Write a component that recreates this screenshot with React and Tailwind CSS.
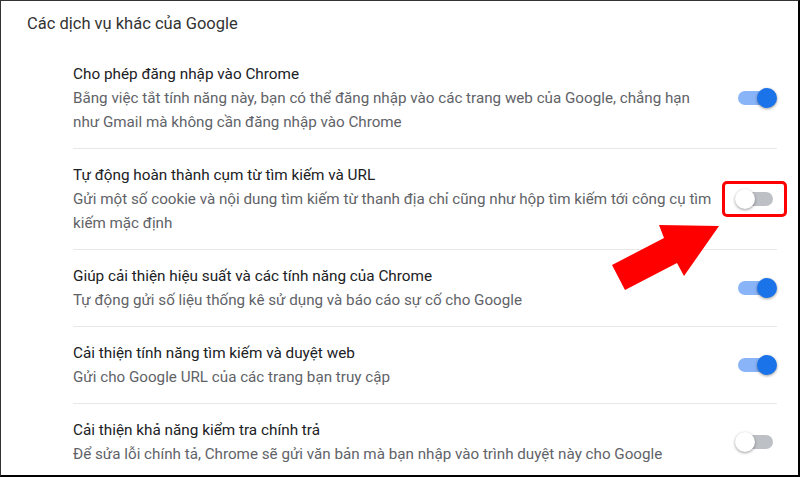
import React from "react";

const rows = [
  {
    title: "Cho phép đăng nhập vào Chrome",
    lines: [
      "Bằng việc tắt tính năng này, bạn có thể đăng nhập vào các trang web của Google, chẳng hạn",
      "như Gmail mà không cần đăng nhập vào Chrome",
    ],
    on: true,
  },
  {
    title: "Tự động hoàn thành cụm từ tìm kiếm và URL",
    lines: [
      "Gửi một số cookie và nội dung tìm kiếm từ thanh địa chỉ cũng như hộp tìm kiếm tới công cụ tìm",
      "kiếm mặc định",
    ],
    on: false,
    marked: true,
  },
  {
    title: "Giúp cải thiện hiệu suất và các tính năng của Chrome",
    lines: ["Tự động gửi số liệu thống kê sử dụng và báo cáo sự cố cho Google"],
    on: true,
  },
  {
    title: "Cải thiện tính năng tìm kiếm và duyệt web",
    lines: ["Gửi cho Google URL của các trang bạn truy cập"],
    on: true,
  },
  {
    title: "Cải thiện khả năng kiểm tra chính trả",
    lines: ["Để sửa lỗi chính tả, Chrome sẽ gửi văn bản mà bạn nhập vào trình duyệt này cho Google"],
    on: false,
  },
];

function Toggle({ on }) {
  return (
    <div className={`relative w-[42px] h-[20px] shrink-0 flex ${on ? "justify-end" : "justify-start"}`}>
      {/* track */}
      <div
        className={`absolute left-[3px] right-[4px] top-[3px] h-[14px] rounded-full ${
          on ? "bg-[#8ab4f8]" : "bg-[#bdc1c6]"
        }`}
      />
      {/* knob */}
      <div
        className={`relative w-[20px] h-[20px] rounded-full shadow-[0_1px_3px_rgba(0,0,0,0.4)] ${
          on ? "bg-[#1a73e8]" : "bg-white"
        }`}
      />
    </div>
  );
}

export default function App() {
  return (
    <div
      className="relative w-[800px] h-[477px] overflow-hidden bg-white border-t border-l border-[#333] border-r-2 border-b-2 border-r-black border-b-black"
      style={{ fontFamily: "Roboto, 'Noto Sans', sans-serif" }}
    >
      {/* Header */}
      <div className="h-[47px] flex items-center pl-[26px] text-[16.5px] text-[#333]">
        Các dịch vụ khác của Google
      </div>

      <div className="pl-[72px] pr-[21px]">
        {rows.map((row, i) => (
          <div
            key={i}
            className={`flex items-center py-[14px] ${
              i < rows.length - 1 ? "border-b border-[#e8e8e8]" : ""
            }`}
          >
            <div className="flex-1 min-w-0">
              <div className="text-[15.3px] leading-[24px] text-[#202124]">{row.title}</div>
              {row.lines.map((l, j) => (
                <div key={j} className="text-[15.2px] leading-[24px] text-[#5f6368] whitespace-nowrap">
                  {l}
                </div>
              ))}
            </div>
            <div className="relative">
              <Toggle on={row.on} />
              {row.marked && (
                <div className="absolute -left-[13px] -top-[8px] w-[65px] h-[36px] border-[3px] border-[#ff0000] rounded-[5px]" />
              )}
            </div>
          </div>
        ))}
      </div>

      {/* Red arrow */}
      <svg className="absolute left-0 top-0 pointer-events-none" width="800" height="477">
        <polygon
          points="718,225 658,224 663,237 611,264 624,289 676,262 683,275"
          fill="#ff0000"
        />
      </svg>
    </div>
  );
}
